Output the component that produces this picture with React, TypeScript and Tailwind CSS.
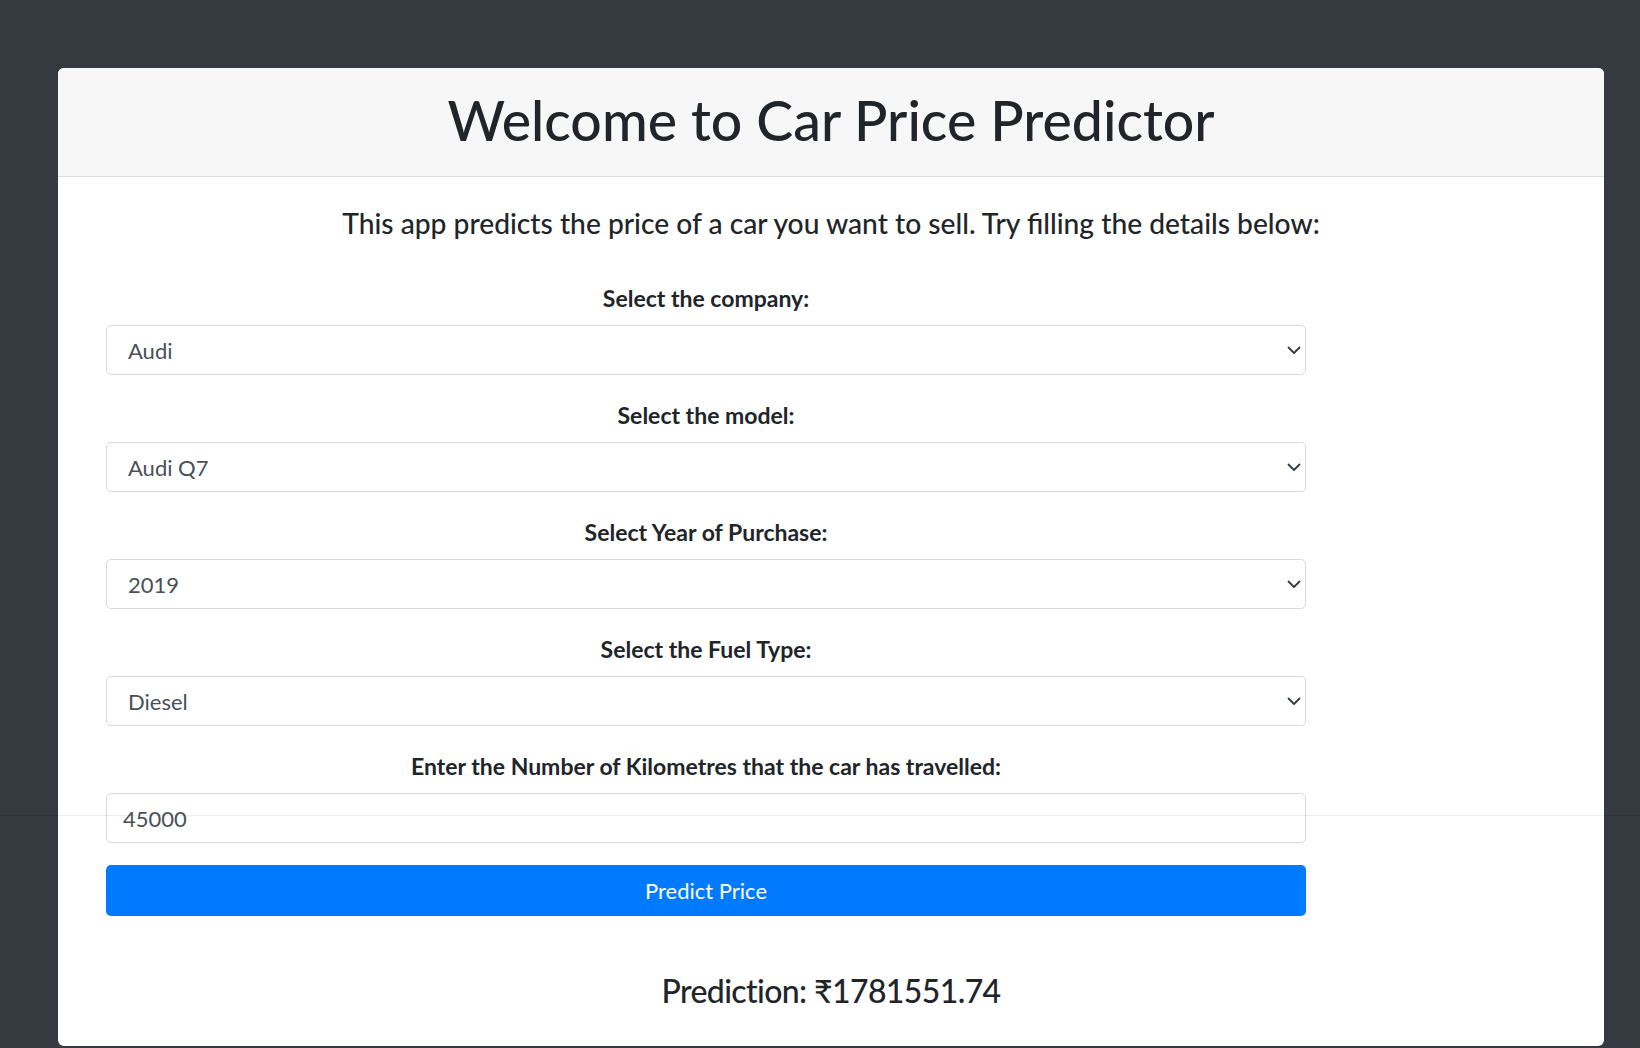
import React from "react";

const FONT = { fontFamily: "Lato, 'Noto Sans', 'DejaVu Sans', sans-serif" };

function Chevron() {
  return (
    <svg
      className="pointer-events-none absolute right-[4px] top-1/2 -translate-y-1/2"
      width="16"
      height="16"
      viewBox="0 0 16 16"
      fill="none"
    >
      <path d="m2.5 5.5 5.5 5.5 5.5-5.5" stroke="#343a40" strokeWidth="1.8" strokeLinecap="round" strokeLinejoin="round" />
    </svg>
  );
}

function SelectGroup({ label, value, options }: { label: string; value: string; options: string[] }) {
  return (
    <div className="mb-[24px]">
      <label className="block text-center font-bold text-[23px] leading-[33px] mb-[10px] text-[#212529]">{label}</label>
      <div className="relative h-[50px]">
        <select
          defaultValue={value}
          className="appearance-none w-full h-[50px] rounded-[5px] border border-[#d6dade] bg-white pl-[21px] pr-[40px] text-[22px] text-[#495057] outline-none"
          style={FONT}
        >
          {options.map((o) => (
            <option key={o} value={o}>
              {o}
            </option>
          ))}
        </select>
        <Chevron />
      </div>
    </div>
  );
}

export default function App() {
  return (
    <div className="relative min-h-[1048px] bg-[#343a40] pt-[68px] pl-[58px] pr-[36px] overflow-hidden" style={FONT}>
      <div className="bg-white rounded-[6px] overflow-hidden">
        <div className="h-[109px] bg-[#f7f7f7] border-b border-[#dfdfdf] flex items-center justify-center">
          <h1 className="text-[55.4px] leading-[67px] font-medium text-[#212529] -mt-[5px]">Welcome to Car Price Predictor</h1>
        </div>
        <div className="px-[48px] pt-[29px] pb-[35px]">
          <p className="text-center text-[28.2px] leading-[34px] font-medium text-[#212529]">
            This app predicts the price of a car you want to sell. Try filling the details below:
          </p>
          <form className="w-[1200px] mt-[42px]" onSubmit={(e) => e.preventDefault()}>
            <SelectGroup label="Select the company:" value="Audi" options={["Audi", "BMW", "Honda", "Hyundai", "Maruti"]} />
            <SelectGroup label="Select the model:" value="Audi Q7" options={["Audi A4", "Audi A6", "Audi Q7"]} />
            <SelectGroup label="Select Year of Purchase:" value="2019" options={["2019", "2018", "2017"]} />
            <SelectGroup label="Select the Fuel Type:" value="Diesel" options={["Diesel", "Petrol", "LPG"]} />
            <div className="mb-[22px]">
              <label className="block text-center font-bold text-[23px] leading-[33px] mb-[10px] text-[#212529]">
                Enter the Number of Kilometres that the car has travelled:
              </label>
              <input
                defaultValue="45000"
                className="w-full h-[50px] rounded-[5px] border border-[#d6dade] bg-white pl-[16px] text-[22px] text-[#495057] outline-none"
                style={FONT}
              />
            </div>
            <button
              type="submit"
              className="w-full h-[51px] rounded-[5px] bg-[#007bff] text-white text-[22px]"
              style={FONT}
            >
              Predict Price
            </button>
          </form>
          <h4 className="mt-[55px] text-center text-[32px] leading-[40px] font-medium tracking-[-0.6px] text-[#212529]">
            Prediction: ₹1781551.74
          </h4>
        </div>
      </div>
      <div className="pointer-events-none absolute left-0 top-[815px] w-full h-px bg-black/[0.07]" />
    </div>
  );
}
